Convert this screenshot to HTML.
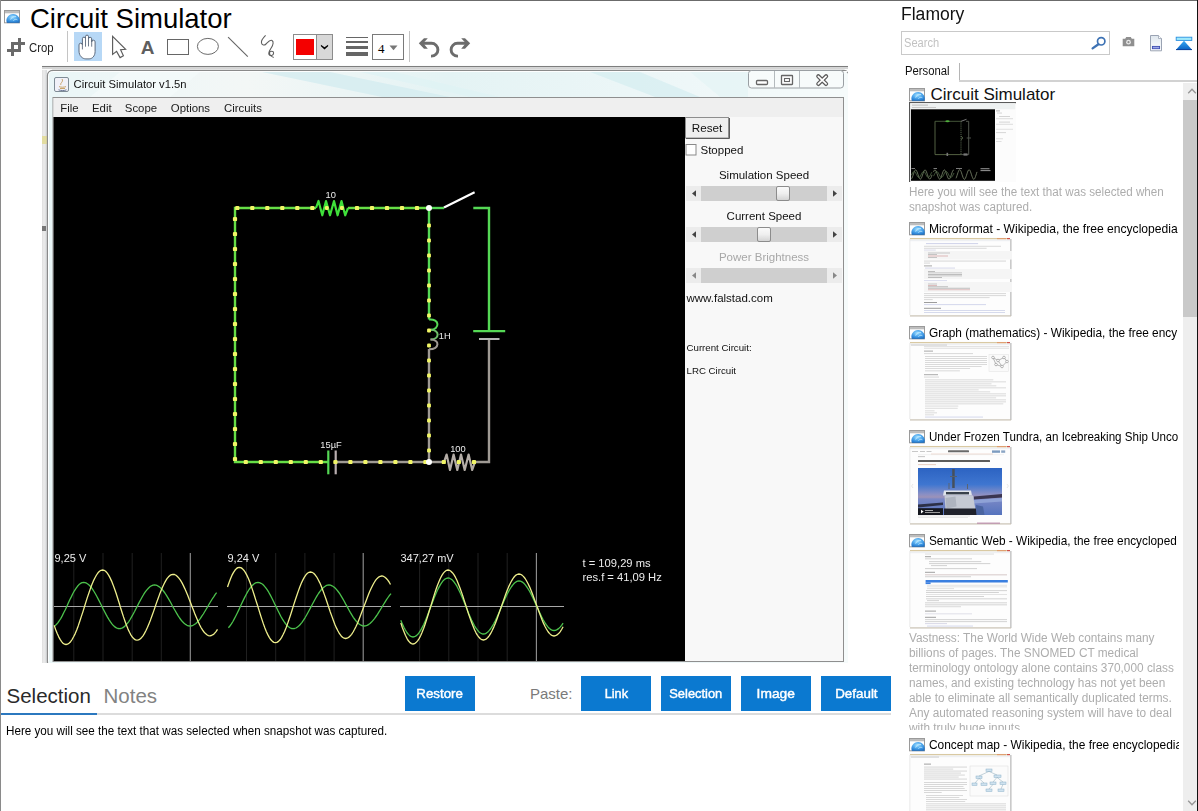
<!DOCTYPE html>
<html>
<head>
<meta charset="utf-8">
<title>Circuit Simulator</title>
<style>
html,body{margin:0;padding:0;}
html{width:1198px;height:811px;overflow:hidden;}
body{width:1198px;height:811px;overflow:hidden;background:#fff;position:relative;font-family:"Liberation Sans",sans-serif;color:#000;}
.a{position:absolute;}
.s{display:inline-block;transform-origin:0 50%;white-space:nowrap;}
.btn .s{transform-origin:50% 50%;}
.t{position:absolute;white-space:nowrap;line-height:1;}
#topb{left:0;top:0;width:1198px;height:1px;background:#6b6b6b;}
#leftb{left:0;top:0;width:1px;height:811px;background:#8a8a8a;}
#title{left:30px;top:3px;font-size:27.5px;line-height:31px;}
.btn{position:absolute;top:676px;height:35px;width:70px;background:#0b79d0;color:#fff;font-size:13.5px;font-weight:normal;-webkit-text-stroke:0.45px #fff;text-align:center;line-height:35px;}
.it{position:absolute;left:929px;font-size:13px;white-space:nowrap;line-height:16px;width:250px;overflow:hidden;color:#000;}
.gr{position:absolute;left:909px;font-size:12px;color:#adadad;line-height:15px;white-space:nowrap;}
.th{position:absolute;left:909px;width:103px;height:80px;overflow:hidden;}
.th svg,#th1 svg{display:block;}
</style>
</head>
<body>
<svg class="a" width="0" height="0" style="left:0;top:0"><defs><radialGradient id="glb" cx="0.45" cy="0.35" r="0.75"><stop offset="0" stop-color="#a9e2ff"/><stop offset="0.35" stop-color="#5fb4f2"/><stop offset="0.75" stop-color="#2d86d8"/><stop offset="1" stop-color="#2170c0"/></radialGradient></defs></svg>
<div class="a" id="topb"></div>
<div class="a" id="leftb"></div>

<!-- ===== title ===== -->
<svg class="a" style="left:4px;top:10px" width="17" height="14" viewBox="0 0 17 14"><rect x="0.5" y="0.5" width="15" height="12.3" fill="#fff" stroke="#9a9a9a"/><rect x="1" y="1" width="14" height="2.2" fill="#bdbdbd"/><rect x="1" y="3.2" width="14" height="0.8" fill="#e9e9e9"/><path d="M2.9 12.8 A6.7 6.3 0 1 1 15.3 12.8 Z" fill="url(#glb)"/><path d="M6.6 9.6c.8-2.4 3-3.6 5.4-3M9.4 10.6c1.2-1.4 2.8-1.6 4-.8" stroke="#c9eeff" stroke-width="0.9" fill="none" opacity=".85"/><path d="M2.9 12.6H15.3" stroke="#2a6fb4" stroke-width="0.8"/></svg>
<div class="t" id="title">Circuit Simulator</div>

<!-- ===== toolbar ===== -->
<div id="toolbar">
<!-- crop icon -->
<svg class="a" style="left:7px;top:38px" width="19" height="19" viewBox="0 0 19 19"><g fill="#6a6a6a"><rect x="4" y="4" width="3" height="14"/><rect x="4" y="4" width="14" height="3"/><rect x="11" y="0" width="3" height="14"/><rect x="0" y="11" width="14" height="3"/></g></svg>
<div class="t" style="left:29px;top:42px;font-size:12.2px;color:#222;"><span class="s" style="transform:scaleX(.93)">Crop</span></div>
<div class="a" style="left:67px;top:31px;width:1px;height:31px;background:#c4c4c4;"></div>
<!-- hand (selected) -->
<div class="a" style="left:74px;top:32px;width:28px;height:29px;background:#b7d8f6;"></div>
<svg class="a" style="left:78px;top:34px" width="20" height="26" viewBox="0 0 20 26"><path d="M1 17 V10.9 a1.7 1.7 0 0 1 3.4 0 V4.7 a1.55 1.55 0 0 1 3.1 0 V2.6 a1.5 1.5 0 0 1 3 0 V4.9 a1.6 1.6 0 0 1 3.2 0 V7.9 a1.7 1.7 0 0 1 3.4 0 V17.5 c0 4.6 -3 7.4 -6 7.4 h-3.2 c-3.4 0 -6.9 -3 -6.9 -7.9 z" fill="#fff" stroke="#5d6b7e" stroke-width="1"/><path d="M4.4 10.5V15.4M7.5 4.5V12.7M10.5 2.6V12.4M13.7 5V12.7" stroke="#5d6b7e" stroke-width="0.9" fill="none"/></svg>
<!-- arrow -->
<svg class="a" style="left:110px;top:34px" width="18" height="26" viewBox="0 0 18 26"><path d="M2.6 2.4 V20.4 L6.6 17.4 L10.1 23.6 L13.4 21.8 L10.6 15.7 L15.6 15.3 Z" fill="#fff" stroke="#5c5c5c" stroke-width="1.15" stroke-linejoin="miter"/></svg>
<!-- A -->
<div class="t" style="left:140.8px;top:38px;font-size:19px;font-weight:bold;color:#5e5e5e;">A</div>
<!-- rect -->
<div class="a" style="left:167px;top:39px;width:22px;height:16px;border:1px solid #666;box-sizing:border-box;"></div>
<!-- ellipse -->
<svg class="a" style="left:196px;top:37px" width="24" height="18" viewBox="0 0 24 18"><ellipse cx="11.9" cy="9.4" rx="10.5" ry="8" fill="#fff" stroke="#6a6a6a" stroke-width="1"/></svg>
<!-- line -->
<svg class="a" style="left:226px;top:36px" width="24" height="22" viewBox="0 0 24 22"><path d="M2.1 1.1 L21.8 20.7" stroke="#666" stroke-width="1.1" fill="none"/></svg>
<!-- squiggle -->
<svg class="a" style="left:258px;top:34px" width="22" height="26" viewBox="0 0 22 26"><path d="M7.6 1.4 C5 4 3 7 3.5 9 C4 11.5 6.5 11.6 8 10 C10 8 12 5.4 14 6.5 C16 7.6 15 11 13.5 13.5 C12 16 10 18 11 20.5 C12 22.6 15.6 21.6 15.6 19 C15.6 16.5 12 16.8 11.5 18.6 C11.4 20.6 13.5 22.6 15.7 23.5" stroke="#5e5e5e" stroke-width="1.1" fill="none"/></svg>
<!-- color -->
<div class="a" style="left:293px;top:34px;width:40px;height:26px;border:1px solid #8c8c8c;box-sizing:border-box;background:#fff;"></div>
<div class="a" style="left:296px;top:39px;width:18px;height:16px;background:#f40000;"></div>
<div class="a" style="left:316px;top:35px;width:16px;height:24px;background:#d8d8d8;border-left:1px solid #8c8c8c;box-sizing:border-box;"></div>
<svg class="a" style="left:320px;top:44px" width="9" height="6" viewBox="0 0 9 6"><path d="M0.9 0.8 L4.5 3.2 L8.1 0.8 L8.1 2.2 L4.5 5.6 L0.9 2.2 Z" fill="#000"/></svg>
<!-- line width -->
<div class="a" style="left:346px;top:37px;width:22px;height:1px;background:#666;"></div>
<div class="a" style="left:346px;top:41px;width:22px;height:2px;background:#666;"></div>
<div class="a" style="left:346px;top:46px;width:22px;height:3px;background:#666;"></div>
<div class="a" style="left:346px;top:52px;width:22px;height:4px;background:#666;"></div>
<div class="a" style="left:372px;top:34px;width:32px;height:26px;border:1px solid #7a7a7a;box-sizing:border-box;background:#fff;"></div>
<div class="t" style="left:378px;top:41.5px;font-size:13px;font-family:'Liberation Serif',serif;">4</div>
<svg class="a" style="left:389px;top:45px" width="9" height="6" viewBox="0 0 9 6"><path d="M0.5 0.5 L4.5 5.2 L8.5 0.5 Z" fill="#777"/></svg>
<div class="a" style="left:409px;top:31px;width:1px;height:31px;background:#c4c4c4;"></div>
<!-- undo/redo -->
<svg class="a" style="left:417px;top:36px" width="25" height="22" viewBox="0 0 25 22"><path d="M1.8 7.3 L7 2.2 H10.8 L7.3 6 V8.6 L10.8 12.7 H7 Z" fill="#6c6c6c"/><path d="M6 7.3 H14.5 A6.4 6.4 0 0 1 14.5 20.1 H14" stroke="#6c6c6c" stroke-width="2.9" fill="none"/></svg>
<svg class="a" style="left:447px;top:36px" width="25" height="22" viewBox="0 0 25 22"><g transform="translate(25,0) scale(-1,1)"><path d="M1.8 7.3 L7 2.2 H10.8 L7.3 6 V8.6 L10.8 12.7 H7 Z" fill="#6c6c6c"/><path d="M6 7.3 H14.5 A6.4 6.4 0 0 1 14.5 20.1 H14" stroke="#6c6c6c" stroke-width="2.9" fill="none"/></g></svg>
</div>

<!-- ===== screenshot ===== -->
<div id="shot">
<svg class="a" style="left:42px;top:65px;filter:blur(0.4px)" width="806" height="598" viewBox="42 65 806 598" font-family="Liberation Sans, sans-serif">
<defs><linearGradient id="tb" x1="0" y1="0" x2="1" y2="0"><stop offset="0" stop-color="#eaf6f7"/><stop offset="0.25" stop-color="#f3f7f6"/><stop offset="0.5" stop-color="#e4f3f4"/><stop offset="0.8" stop-color="#eef7f8"/><stop offset="1" stop-color="#f6fbfb"/></linearGradient><linearGradient id="thg" x1="0" y1="0" x2="0" y2="1"><stop offset="0" stop-color="#fbfbfb"/><stop offset="0.5" stop-color="#efefef"/><stop offset="1" stop-color="#d2d2d2"/></linearGradient><linearGradient id="ls" x1="0" y1="0" x2="1" y2="0"><stop offset="0" stop-color="#dedede"/><stop offset="0.4" stop-color="#ececec"/><stop offset="1" stop-color="#d6d8da"/></linearGradient></defs>
<rect x="42" y="65" width="806" height="598" fill="#fbfcfc"/>
<rect x="42" y="70" width="5" height="593" fill="url(#ls)"/>
<rect x="42" y="136" width="5" height="8" fill="#e2dca0"/>
<rect x="42" y="226" width="4" height="5" fill="#777"/>
<rect x="42" y="66" width="806" height="1.3" fill="#7d7d7d"/>
<rect x="42" y="68" width="806" height="1" fill="#d4d4d4"/>
<rect x="47.5" y="70.5" width="801.5" height="596" rx="5" fill="url(#tb)" stroke="#8a8a8a" stroke-width="1.3"/>
<rect x="48.5" y="71.5" width="803" height="594" rx="4" fill="none" stroke="#fdfefe" stroke-width="1"/>
<g opacity="0.8"><path d="M262 72L330 72L450 97L382 97Z" fill="#d5edf1"/><path d="M360 72L395 72L500 97L470 97Z" fill="#e0f3f5"/><path d="M590 72L640 72L700 97L655 97Z" fill="#d8eff2"/><path d="M120 72L200 72L170 97L90 97Z" fill="#f4fafa"/><path d="M690 72L748 72L748 97L720 97Z" fill="#e6f5f6"/></g>
<rect x="54.5" y="77.5" width="14" height="14" rx="1.5" fill="#f1f1f8" stroke="#7f8c96"/>
<path d="M60 88.5h5M59 86.6c2 .8 5 .8 7 0M61 85c-1.5-2 3-3 1-6" stroke="#c39a5a" stroke-width="0.9" fill="none"/><path d="M58.5 89.8c2.5 1 6 1 8 0" stroke="#6c7a96" stroke-width="1" fill="none"/>
<text x="73.6" y="88.4" font-size="11.6" fill="#111" textLength="113" lengthAdjust="spacingAndGlyphs">Circuit Simulator v1.5n</text>
<rect x="748.5" y="70.5" width="95" height="17.5" rx="3" fill="#f7fbfb" stroke="#9a9fa3"/>
<path d="M774.5 71v17M799.5 71v17" stroke="#b4babd"/>
<rect x="756.5" y="80.5" width="11" height="4" rx="1" fill="#fff" stroke="#666" stroke-width="1.3"/>
<rect x="781.5" y="75.5" width="11" height="9" rx="0.5" fill="#fff" stroke="#666" stroke-width="1.3"/><rect x="784.5" y="78.5" width="5" height="3" fill="#fff" stroke="#666" stroke-width="1.1"/>
<path d="M818.3 76.3l7.8 7.6M826.1 76.3l-7.8 7.6" stroke="#5a5a5a" stroke-width="4.2" stroke-linecap="round"/><path d="M818.3 76.3l7.8 7.6M826.1 76.3l-7.8 7.6" stroke="#fff" stroke-width="1.7" stroke-linecap="round"/>
<rect x="53" y="97.5" width="790.5" height="564" fill="#f6f6f6" stroke="#8f8f8f" stroke-width="1"/>
<rect x="53.5" y="98" width="789.5" height="19" fill="#efefef"/>
<text x="60.3" y="111.6" font-size="11.4" fill="#1a1a1a">File</text>
<text x="92" y="111.6" font-size="11.4" fill="#1a1a1a">Edit</text>
<text x="124.8" y="111.6" font-size="11.4" fill="#1a1a1a">Scope</text>
<text x="170.8" y="111.6" font-size="11.4" fill="#1a1a1a">Options</text>
<text x="224" y="111.6" font-size="11.4" fill="#1a1a1a">Circuits</text>
<rect x="53.5" y="117" width="631.5" height="544" fill="#000"/>
<g fill="none" stroke-width="2.4" stroke-linecap="butt">
<path d="M316 208H235V462H328" stroke="#66de46" stroke-linejoin="miter"/>
<path d="M348 208H429" stroke="#66de46"/>
<path d="M316 208 L318.5 201 L322.3 215.3 L326 201 L330 215.3 L334 201 L337.6 215.3 L341.5 201 L345.2 215.3 L348 208" stroke="#3fe03a" stroke-width="2.2" stroke-linejoin="round"/>
<path d="M429 208V319.5" stroke="#55d855"/>
<path d="M429 319.5 C440 318.5 440 329.5 430.5 329.8" stroke="#55d855" stroke-width="2"/>
<path d="M430.5 329.8 C440 329.5 440 339.5 430.5 339.6" stroke="#6fbf6a" stroke-width="2"/>
<path d="M430.5 339.6 C440 339.5 440 349 429 349.3" stroke="#9f9a94" stroke-width="2"/>
<path d="M429 349V462" stroke="#9f9a94"/>
<path d="M328.3 450.5V474.3" stroke="#55d855" stroke-width="2.2"/>
<path d="M335.7 450.5V474.3" stroke="#b9aeb0" stroke-width="2.2"/>
<path d="M336 462H444" stroke="#9f9a94"/>
<path d="M444 462 L446.6 454.6 L450 470 L453.6 454.6 L457.3 470 L461 454.6 L464.7 470 L468.6 454.6 L472.2 470 L475 462" stroke="#b3aca6" stroke-width="2.2" stroke-linejoin="round"/>
<path d="M475 462H489V339" stroke="#9f9a94" stroke-linejoin="miter"/>
<path d="M479 339H499.5" stroke="#b5b5b5" stroke-width="2"/>
<path d="M473.2 331.2H505.2" stroke="#55d855" stroke-width="2.2"/>
<path d="M473.3 208H489V331" stroke="#55d855" stroke-linejoin="miter"/>
<path d="M429 208H444" stroke="#55d855"/>
<path d="M444 207.4L474.6 192.2" stroke="#fff" stroke-width="2.2"/>
</g>
<g fill="#f1f566">
<rect x="235.2" y="205.9" width="4.2" height="4.2" rx="1.2"/>
<rect x="250.2" y="205.9" width="4.2" height="4.2" rx="1.2"/>
<rect x="265.2" y="205.9" width="4.2" height="4.2" rx="1.2"/>
<rect x="280.2" y="205.9" width="4.2" height="4.2" rx="1.2"/>
<rect x="295.2" y="205.9" width="4.2" height="4.2" rx="1.2"/>
<rect x="310.2" y="205.9" width="4.2" height="4.2" rx="1.2"/>
<rect x="324.9" y="206.1" width="3.8" height="3.8" rx="1.2"/>
<rect x="340" y="206.1" width="3.8" height="3.8" rx="1.2"/>
<rect x="354.9" y="205.9" width="4.2" height="4.2" rx="1.2"/>
<rect x="369.9" y="205.9" width="4.2" height="4.2" rx="1.2"/>
<rect x="384.9" y="205.9" width="4.2" height="4.2" rx="1.2"/>
<rect x="399.9" y="205.9" width="4.2" height="4.2" rx="1.2"/>
<rect x="414.9" y="205.9" width="4.2" height="4.2" rx="1.2"/>
<rect x="232.9" y="216.9" width="4.2" height="4.2" rx="1.2"/>
<rect x="232.9" y="231.9" width="4.2" height="4.2" rx="1.2"/>
<rect x="232.9" y="246.9" width="4.2" height="4.2" rx="1.2"/>
<rect x="232.9" y="261.9" width="4.2" height="4.2" rx="1.2"/>
<rect x="232.9" y="276.9" width="4.2" height="4.2" rx="1.2"/>
<rect x="232.9" y="291.9" width="4.2" height="4.2" rx="1.2"/>
<rect x="232.9" y="306.9" width="4.2" height="4.2" rx="1.2"/>
<rect x="232.9" y="321.9" width="4.2" height="4.2" rx="1.2"/>
<rect x="232.9" y="336.9" width="4.2" height="4.2" rx="1.2"/>
<rect x="232.9" y="351.9" width="4.2" height="4.2" rx="1.2"/>
<rect x="232.9" y="366.9" width="4.2" height="4.2" rx="1.2"/>
<rect x="232.9" y="381.9" width="4.2" height="4.2" rx="1.2"/>
<rect x="232.9" y="396.9" width="4.2" height="4.2" rx="1.2"/>
<rect x="232.9" y="411.9" width="4.2" height="4.2" rx="1.2"/>
<rect x="232.9" y="426.9" width="4.2" height="4.2" rx="1.2"/>
<rect x="232.9" y="441.9" width="4.2" height="4.2" rx="1.2"/>
<rect x="232.9" y="456.9" width="4.2" height="4.2" rx="1.2"/>
<rect x="243.7" y="459.9" width="4.2" height="4.2" rx="1.2"/>
<rect x="258.7" y="459.9" width="4.2" height="4.2" rx="1.2"/>
<rect x="273.7" y="459.9" width="4.2" height="4.2" rx="1.2"/>
<rect x="288.7" y="459.9" width="4.2" height="4.2" rx="1.2"/>
<rect x="303.7" y="459.9" width="4.2" height="4.2" rx="1.2"/>
<rect x="318.7" y="459.9" width="4.2" height="4.2" rx="1.2"/>
<rect x="333.3" y="459.9" width="4.2" height="4.2" rx="1.2"/>
<rect x="348.3" y="459.9" width="4.2" height="4.2" rx="1.2"/>
<rect x="363.3" y="459.9" width="4.2" height="4.2" rx="1.2"/>
<rect x="378.3" y="459.9" width="4.2" height="4.2" rx="1.2"/>
<rect x="393.3" y="459.9" width="4.2" height="4.2" rx="1.2"/>
<rect x="408.3" y="459.9" width="4.2" height="4.2" rx="1.2"/>
<rect x="423.3" y="459.9" width="4.2" height="4.2" rx="1.2"/>
<rect x="441.7" y="459.9" width="4.2" height="4.2" rx="1.2"/>
<rect x="456.7" y="459.9" width="4.2" height="4.2" rx="1.2"/>
<rect x="471.9" y="459.9" width="4.2" height="4.2" rx="1.2"/>
<rect x="427.1" y="223.6" width="3.8" height="3.8" rx="1.2"/>
<rect x="427.1" y="238.6" width="3.8" height="3.8" rx="1.2"/>
<rect x="427.1" y="253.6" width="3.8" height="3.8" rx="1.2"/>
<rect x="427.1" y="268.6" width="3.8" height="3.8" rx="1.2"/>
<rect x="427.1" y="283.6" width="3.8" height="3.8" rx="1.2"/>
<rect x="427.1" y="298.6" width="3.8" height="3.8" rx="1.2"/>
<rect x="427.1" y="313.6" width="3.8" height="3.8" rx="1.2"/>
<rect x="427.1" y="328.6" width="3.8" height="3.8" rx="1.2"/>
<rect x="427.1" y="343.6" width="3.8" height="3.8" rx="1.2"/>
<rect x="427.1" y="358.6" width="3.8" height="3.8" rx="1.2"/>
<rect x="427.1" y="373.6" width="3.8" height="3.8" rx="1.2"/>
<rect x="427.1" y="388.6" width="3.8" height="3.8" rx="1.2"/>
<rect x="427.1" y="403.6" width="3.8" height="3.8" rx="1.2"/>
<rect x="427.1" y="418.6" width="3.8" height="3.8" rx="1.2"/>
<rect x="427.1" y="433.6" width="3.8" height="3.8" rx="1.2"/>
<rect x="427.1" y="448.6" width="3.8" height="3.8" rx="1.2"/>
</g>
<circle cx="429" cy="208" r="3" fill="#fff"/><circle cx="429" cy="462" r="3" fill="#fff"/>
<g font-size="9.3" fill="#ececec">
<text x="325.5" y="197.8">10</text><text x="438.8" y="339">1H</text><text x="320.3" y="448.3">15µF</text><text x="450.2" y="452">100</text>
</g>
<g stroke="#202020" stroke-width="1">
<path d="M73.8 553V661"/>
<path d="M103 553V661"/>
<path d="M132.2 553V661"/>
<path d="M161.3 553V661"/>
</g>
<path d="M190.3 553V661" stroke="#949494" stroke-width="1.1"/>
<path d="M54 606.5H218" stroke="#a8a8a8" stroke-width="1.2"/>
<g fill="none" stroke-width="1.3" stroke-linejoin="round">
<path d="M54.6 626 L56.1 624.8 L57.6 623.1 L59.1 621 L60.7 618.6 L62.2 615.9 L63.7 612.8 L65.3 609.7 L66.8 606.4 L68.3 603 L69.8 599.7 L71.4 596.6 L72.9 593.5 L74.4 590.8 L76 588.4 L77.5 586.3 L79 584.6 L80.5 583.4 L82.1 582.6 L83.6 582.4 L85.1 582.6 L86.6 583.2 L88.1 584.2 L89.6 585.5 L91.1 587.2 L92.5 589.2 L94 591.5 L95.5 594 L97 596.7 L98.5 599.6 L100 602.5 L101.5 605.5 L103 608.6 L104.5 611.5 L106 614.4 L107.5 617.1 L109 619.6 L110.5 621.9 L111.9 623.9 L113.4 625.6 L114.9 626.9 L116.4 627.9 L117.9 628.5 L119.4 628.7 L120.9 628.5 L122.5 627.9 L124 626.9 L125.5 625.5 L127 623.8 L128.6 621.8 L130.1 619.5 L131.6 616.9 L133.1 614.2 L134.7 611.3 L136.2 608.3 L137.7 605.4 L139.2 602.4 L140.8 599.5 L142.3 596.8 L143.8 594.2 L145.3 591.9 L146.9 589.9 L148.4 588.2 L149.9 586.8 L151.4 585.8 L153 585.2 L154.5 585 L156 585.2 L157.5 585.7 L158.9 586.6 L160.4 587.7 L161.9 589.2 L163.4 591 L164.9 593 L166.3 595.2 L167.8 597.7 L169.3 600.2 L170.8 602.8 L172.2 605.5 L173.7 608.2 L175.2 610.8 L176.7 613.3 L178.2 615.8 L179.6 618 L181.1 620 L182.6 621.8 L184.1 623.3 L185.6 624.4 L187 625.3 L188.5 625.8 L190 626 L191.5 625.8 L193 625.3 L194.4 624.5 L195.9 623.4 L197.4 622 L198.9 620.3 L200.4 618.4 L201.8 616.2 L203.3 614 L204.8 611.5 L206.3 609 L207.8 606.5 L209.2 604 L210.7 601.5 L212.2 599 L213.7 596.8 L215.1 594.6 L216.6 592.7" stroke="#4cc24c"/>
<path d="M54.2 625.4 L55.6 629.5 L57.1 633.3 L58.6 636.6 L60.1 639.4 L61.6 641.6 L63 643.2 L64.5 644.2 L66 644.5 L67.5 644.2 L69 643.2 L70.6 641.7 L72.1 639.5 L73.6 636.8 L75.2 633.6 L76.7 629.9 L78.2 625.9 L79.7 621.5 L81.2 616.9 L82.8 612.1 L84.3 607.2 L85.8 602.4 L87.3 597.6 L88.9 593 L90.4 588.6 L91.9 584.6 L93.4 580.9 L95 577.7 L96.5 575 L98 572.8 L99.5 571.3 L101.1 570.3 L102.6 570 L104.1 570.3 L105.6 571.3 L107.1 572.9 L108.6 575.1 L110.1 577.9 L111.6 581.1 L113.1 584.9 L114.6 589 L116.1 593.3 L117.6 598 L119.1 602.7 L120.5 607.5 L122 612.2 L123.5 616.9 L125 621.2 L126.5 625.3 L128 629.1 L129.5 632.3 L131 635.1 L132.5 637.3 L134 638.9 L135.5 639.9 L137 640.2 L138.5 639.9 L140 639.1 L141.5 637.7 L143 635.8 L144.5 633.4 L146 630.5 L147.5 627.3 L149 623.7 L150.5 619.9 L152 615.8 L153.5 611.6 L155 607.2 L156.5 602.9 L158 598.7 L159.5 594.6 L161 590.8 L162.5 587.2 L164 584 L165.5 581.1 L167 578.7 L168.5 576.8 L170 575.4 L171.5 574.6 L173 574.3 L174.5 574.5 L176 575.3 L177.4 576.5 L178.9 578.1 L180.4 580.2 L181.9 582.6 L183.3 585.4 L184.8 588.6 L186.3 592 L187.8 595.5 L189.2 599.3 L190.7 603.1 L192.2 607 L193.7 610.8 L195.1 614.6 L196.6 618.1 L198.1 621.5 L199.6 624.7 L201 627.5 L202.5 629.9 L204 632 L205.5 633.6 L206.9 634.8 L208.4 635.6 L209.9 635.8 L211.4 635.5 L213 634.7 L214.5 633.4 L216 631.6 L217.5 629.3" stroke="#eeee8c"/>
</g>
<g stroke="#202020" stroke-width="1">
<path d="M246.5 553V661"/>
<path d="M275.7 553V661"/>
<path d="M304.9 553V661"/>
<path d="M334.1 553V661"/>
</g>
<path d="M363.2 553V661" stroke="#949494" stroke-width="1.1"/>
<path d="M227 606.5H391" stroke="#a8a8a8" stroke-width="1.2"/>
<g fill="none" stroke-width="1.3" stroke-linejoin="round">
<path d="M228.4 627.7 L229.9 626 L231.4 623.9 L232.9 621.5 L234.3 618.9 L235.8 616 L237.3 613 L238.8 609.9 L240.2 606.7 L241.7 603.5 L243.2 600.4 L244.7 597.4 L246.2 594.5 L247.6 591.9 L249.1 589.5 L250.6 587.4 L252.1 585.7 L253.6 584.2 L255 583.2 L256.5 582.6 L258 582.4 L259.5 582.6 L261 583.3 L262.6 584.3 L264.1 585.8 L265.6 587.6 L267.1 589.7 L268.7 592.2 L270.2 594.9 L271.7 597.8 L273.2 600.8 L274.7 604 L276.3 607.1 L277.8 610.3 L279.3 613.3 L280.8 616.2 L282.3 618.9 L283.9 621.4 L285.4 623.5 L286.9 625.3 L288.4 626.8 L290 627.8 L291.5 628.5 L293 628.7 L294.5 628.5 L296 628 L297.5 627 L299 625.8 L300.5 624.2 L302 622.3 L303.5 620.2 L305 617.8 L306.5 615.2 L308 612.5 L309.5 609.7 L311 606.9 L312.5 604 L314 601.2 L315.5 598.5 L317 595.9 L318.5 593.5 L320 591.4 L321.5 589.5 L323 587.9 L324.5 586.7 L326 585.7 L327.5 585.2 L329 585 L330.5 585.2 L332 585.8 L333.6 586.7 L335.1 588 L336.6 589.6 L338.1 591.5 L339.7 593.7 L341.2 596.1 L342.7 598.6 L344.2 601.3 L345.7 604.1 L347.3 606.9 L348.8 609.7 L350.3 612.4 L351.8 614.9 L353.3 617.3 L354.9 619.5 L356.4 621.4 L357.9 623 L359.4 624.3 L361 625.2 L362.5 625.8 L364 626 L365.5 625.8 L367 625.4 L368.5 624.6 L370 623.5 L371.5 622.1 L373 620.4 L374.5 618.6 L376 616.5 L377.5 614.3 L379 611.9 L380.5 609.5 L382 607 L383.5 604.5 L385 602.1 L386.5 599.7 L388 597.5 L389.5 595.4 L391 593.6" stroke="#4cc24c"/>
<path d="M227.5 587 L229 582.7 L230.5 578.8 L231.9 575.4 L233.4 572.6 L234.9 570.3 L236.4 568.6 L237.8 567.6 L239.3 567.3 L240.8 567.6 L242.3 568.6 L243.8 570.2 L245.3 572.4 L246.8 575.1 L248.3 578.3 L249.8 582 L251.3 586.1 L252.8 590.6 L254.3 595.2 L255.8 600.1 L257.4 605 L258.9 609.9 L260.4 614.8 L261.9 619.4 L263.4 623.9 L264.9 628 L266.4 631.7 L267.9 634.9 L269.4 637.6 L270.9 639.8 L272.4 641.4 L273.9 642.4 L275.4 642.7 L276.9 642.4 L278.5 641.4 L280 639.8 L281.5 637.6 L283 634.8 L284.6 631.5 L286.1 627.7 L287.6 623.6 L289.1 619.2 L290.7 614.5 L292.2 609.8 L293.7 604.9 L295.2 600.2 L296.8 595.5 L298.3 591.1 L299.8 587 L301.3 583.2 L302.9 579.9 L304.4 577.1 L305.9 574.9 L307.4 573.3 L309 572.3 L310.5 572 L312 572.3 L313.6 573.2 L315.1 574.8 L316.6 576.8 L318.1 579.5 L319.7 582.6 L321.2 586.1 L322.7 590 L324.2 594.1 L325.8 598.5 L327.3 603 L328.8 607.5 L330.3 612 L331.9 616.4 L333.4 620.5 L334.9 624.4 L336.4 627.9 L338 631 L339.5 633.7 L341 635.7 L342.5 637.3 L344.1 638.2 L345.6 638.5 L347.1 638.2 L348.6 637.4 L350.1 636.1 L351.6 634.3 L353.1 632 L354.6 629.3 L356.1 626.3 L357.6 622.9 L359.1 619.2 L360.6 615.3 L362.1 611.3 L363.6 607.2 L365.2 603.2 L366.7 599.2 L368.2 595.3 L369.7 591.6 L371.2 588.2 L372.7 585.2 L374.2 582.5 L375.7 580.2 L377.2 578.4 L378.7 577.1 L380.2 576.3 L381.7 576 L383.2 576.2 L384.6 577 L386.1 578.2 L387.6 579.9 L389.1 582 L390.5 584.5" stroke="#eeee8c"/>
</g>
<g stroke="#202020" stroke-width="1">
<path d="M419.6 553V661"/>
<path d="M448.8 553V661"/>
<path d="M478 553V661"/>
<path d="M507.2 553V661"/>
</g>
<path d="M536.4 553V661" stroke="#949494" stroke-width="1.1"/>
<path d="M400 606.5H564" stroke="#a8a8a8" stroke-width="1.2"/>
<g fill="none" stroke-width="1.3" stroke-linejoin="round">
<path d="M400.8 620.3 L402.3 623.9 L403.9 627.2 L405.4 630 L406.9 632.5 L408.4 634.4 L410 635.9 L411.5 636.7 L413 637 L414.5 636.7 L416 635.9 L417.6 634.6 L419.1 632.7 L420.6 630.4 L422.1 627.6 L423.7 624.5 L425.2 621.1 L426.7 617.4 L428.2 613.5 L429.7 609.5 L431.3 605.5 L432.8 601.5 L434.3 597.6 L435.8 593.9 L437.3 590.5 L438.9 587.4 L440.4 584.6 L441.9 582.3 L443.4 580.4 L445 579.1 L446.5 578.3 L448 578 L449.5 578.2 L450.9 579 L452.4 580.1 L453.9 581.8 L455.4 583.8 L456.9 586.2 L458.3 589 L459.8 592 L461.3 595.3 L462.8 598.8 L464.2 602.3 L465.7 606 L467.2 609.7 L468.6 613.2 L470.1 616.7 L471.6 620 L473.1 623 L474.5 625.8 L476 628.2 L477.5 630.2 L479 631.9 L480.4 633 L481.9 633.8 L483.4 634 L484.9 633.8 L486.4 633.1 L487.8 632 L489.3 630.4 L490.8 628.5 L492.3 626.2 L493.8 623.6 L495.3 620.8 L496.8 617.6 L498.2 614.4 L499.7 611 L501.2 607.5 L502.7 604 L504.2 600.6 L505.6 597.4 L507.1 594.2 L508.6 591.4 L510.1 588.8 L511.6 586.5 L513.1 584.6 L514.5 583 L516 581.9 L517.5 581.2 L519 581 L520.5 581.2 L522 581.9 L523.6 583 L525.1 584.6 L526.6 586.6 L528.1 588.9 L529.7 591.5 L531.2 594.4 L532.7 597.5 L534.2 600.7 L535.7 604.1 L537.3 607.4 L538.8 610.8 L540.3 614 L541.8 617.1 L543.3 620 L544.9 622.6 L546.4 624.9 L547.9 626.9 L549.4 628.5 L551 629.6 L552.5 630.3 L554 630.5 L555.5 630.3 L557 629.6 L558.6 628.6 L560.1 627.1 L561.6 625.3 L563.1 623.1" stroke="#4cc24c"/>
<path d="M400.8 622.9 L402.3 627.5 L403.9 631.6 L405.4 635.3 L406.9 638.3 L408.4 640.8 L410 642.6 L411.5 643.6 L413 644 L414.5 643.7 L416 642.6 L417.6 640.9 L419.1 638.6 L420.6 635.7 L422.1 632.3 L423.7 628.3 L425.2 624 L426.7 619.4 L428.2 614.5 L429.7 609.5 L431.3 604.5 L432.8 599.5 L434.3 594.6 L435.8 590 L437.3 585.7 L438.9 581.7 L440.4 578.3 L441.9 575.4 L443.4 573.1 L445 571.4 L446.5 570.3 L448 570 L449.5 570.3 L450.9 571.2 L452.4 572.7 L453.9 574.7 L455.4 577.2 L456.9 580.3 L458.3 583.7 L459.8 587.5 L461.3 591.6 L462.8 595.9 L464.2 600.4 L465.7 605 L467.2 609.6 L468.6 614.1 L470.1 618.4 L471.6 622.5 L473.1 626.3 L474.5 629.7 L476 632.8 L477.5 635.3 L479 637.3 L480.4 638.8 L481.9 639.7 L483.4 640 L484.9 639.7 L486.4 638.9 L487.8 637.5 L489.3 635.6 L490.8 633.2 L492.3 630.3 L493.8 627.1 L495.3 623.5 L496.8 619.6 L498.2 615.5 L499.7 611.3 L501.2 607 L502.7 602.7 L504.2 598.5 L505.6 594.4 L507.1 590.5 L508.6 586.9 L510.1 583.7 L511.6 580.8 L513.1 578.4 L514.5 576.5 L516 575.1 L517.5 574.3 L519 574 L520.5 574.3 L522 575.1 L523.6 576.6 L525.1 578.5 L526.6 581 L528.1 583.8 L529.7 587.1 L531.2 590.7 L532.7 594.6 L534.2 598.7 L535.7 602.9 L537.3 607.1 L538.8 611.3 L540.3 615.4 L541.8 619.3 L543.3 622.9 L544.9 626.2 L546.4 629 L547.9 631.5 L549.4 633.4 L551 634.9 L552.5 635.7 L554 636 L555.5 635.7 L557 634.9 L558.6 633.6 L560.1 631.8 L561.6 629.5 L563.1 626.8" stroke="#eeee8c"/>
</g>
<g font-size="11" fill="#ececec">
<text x="54.5" y="561.9">9,25 V</text><text x="227.5" y="561.9">9,24 V</text><text x="400.5" y="561.9">347,27 mV</text>
<text x="582.5" y="566.6" font-size="11.2">t = 109,29 ms</text><text x="582.5" y="580.6" font-size="11.2">res.f = 41,09 Hz</text>
</g>
<rect x="685" y="117" width="158" height="544" fill="#f8f8f8"/>
<rect x="685.5" y="117.5" width="43" height="20.5" fill="#efefef" stroke="#8e8e8e"/><path d="M686 138.5H729.5V118" stroke="#5c5c5c" fill="none"/>
<text x="691.8" y="132" font-size="11.7" fill="#111">Reset</text>
<rect x="686" y="144.5" width="10" height="10.5" fill="#fff" stroke="#8a8a8a"/>
<text x="700.5" y="154.2" font-size="11.5" fill="#111">Stopped</text>
<text x="764" y="178.6" font-size="11.5" fill="#111" text-anchor="middle">Simulation Speed</text>
<rect x="686" y="186" width="156" height="15" fill="#ececec"/>
<rect x="701" y="186" width="126" height="15" fill="#cfcfcf"/>
<path d="M696 190.3l-4 3.2l4 3.2z" fill="#444"/>
<path d="M833 190.3l4 3.2l-4 3.2z" fill="#444"/>
<rect x="776.5" y="186.5" width="13" height="14" rx="1.5" fill="url(#thg)" stroke="#8c8c8c"/>
<text x="764" y="219.6" font-size="11.5" fill="#111" text-anchor="middle">Current Speed</text>
<rect x="686" y="227" width="156" height="15" fill="#ececec"/>
<rect x="701" y="227" width="126" height="15" fill="#cfcfcf"/>
<path d="M696 231.3l-4 3.2l4 3.2z" fill="#444"/>
<path d="M833 231.3l4 3.2l-4 3.2z" fill="#444"/>
<rect x="757.5" y="227.5" width="13" height="14" rx="1.5" fill="url(#thg)" stroke="#8c8c8c"/>
<text x="764" y="260.8" font-size="11.5" fill="#a8a8a8" text-anchor="middle">Power Brightness</text>
<rect x="686" y="268" width="156" height="15" fill="#ececec"/>
<rect x="701" y="268" width="126" height="15" fill="#cfcfcf"/>
<path d="M696 272.3l-4 3.2l4 3.2z" fill="#888"/>
<path d="M833 272.3l4 3.2l-4 3.2z" fill="#888"/>
<text x="686.5" y="301.8" font-size="11.5" fill="#111">www.falstad.com</text>
<text x="686.5" y="350.6" font-size="9.7" fill="#111">Current Circuit:</text>
<text x="686.5" y="374" font-size="9.7" fill="#111">LRC Circuit</text>
</svg>
</div>

<!-- ===== bottom ===== -->
<div class="t" style="left:6.5px;top:686px;font-size:20.5px;color:#2a2a2a;">Selection</div>
<div class="t" style="left:103.5px;top:686px;font-size:20.5px;color:#828282;">Notes</div>
<div class="a" style="left:1px;top:713px;width:890px;height:2px;background:#dcdcdc;"></div>
<div class="a" style="left:1px;top:713px;width:96px;height:2px;background:#2b78bf;"></div>
<div class="btn" style="left:405px;"><span class="s" style="transform:scaleX(0.985)">Restore</span></div>
<div class="t" style="left:530px;top:686px;font-size:15px;color:#7a7a7a;">Paste:</div>
<div class="btn" style="left:581px;"><span class="s" style="transform:scaleX(0.94)">Link</span></div>
<div class="btn" style="left:661px;"><span class="s" style="transform:scaleX(0.955)">Selection</span></div>
<div class="btn" style="left:741px;"><span class="s" style="transform:scaleX(1.02)">Image</span></div>
<div class="btn" style="left:821px;"><span class="s" style="transform:scaleX(0.99)">Default</span></div>
<div class="t" style="left:5.5px;top:725px;font-size:12px;"><span class="s" style="transform:scaleX(.972)">Here you will see the text that was selected when snapshot was captured.</span></div>

<!-- ===== right panel ===== -->
<div id="right">
<div class="a" style="left:1197px;top:0;width:1px;height:811px;background:#111;"></div>
<div class="t" style="left:901px;top:4px;font-size:18px;line-height:21px;color:#111;"><span class="s" style="transform:scaleX(.975)">Flamory</span></div>
<div class="a" style="left:901px;top:31px;width:209px;height:24px;border:1px solid #c9c9c9;box-sizing:border-box;background:#fff;"></div>
<div class="t" style="left:904px;top:36px;font-size:12.3px;line-height:14px;color:#c2c2c2;"><span class="s" style="transform:scaleX(.9)">Search</span></div>
<svg class="a" style="left:1090px;top:35px" width="18" height="17" viewBox="0 0 18 17"><circle cx="11.2" cy="6.3" r="3.7" fill="#fff" stroke="#3d72b4" stroke-width="1.7"/><path d="M8.4 9.2 L2.6 13.4" stroke="#3d72b4" stroke-width="2.3" stroke-linecap="round"/></svg>
<svg class="a" style="left:1122px;top:36px" width="14" height="12" viewBox="0 0 14 12"><path d="M0.7 2.7h2.5l1-1.8h4.6l1 1.8h2.5v7.6h-11.6z" fill="#8f8f8f"/><circle cx="6.5" cy="6.2" r="2.4" fill="#e8e8e8"/><circle cx="6.5" cy="6.2" r="1.1" fill="#8f8f8f"/></svg>
<svg class="a" style="left:1149px;top:34px" width="14" height="18" viewBox="0 0 14 18"><defs><linearGradient id="pg" x1="0" y1="0" x2="0" y2="1"><stop offset="0" stop-color="#dfe7ee"/><stop offset="1" stop-color="#ffffff"/></linearGradient></defs><path d="M1.5 1.5h8l3 3v12.3h-11z" fill="url(#pg)" stroke="#9aa3b3" stroke-width="1"/><path d="M9.5 1.5v3h3" fill="#fff" stroke="#9aa3b3" stroke-width="0.8"/><rect x="3.4" y="12.4" width="7.2" height="2.3" fill="#9aa6e8" stroke="#3c4cb0" stroke-width="0.9"/></svg>
<svg class="a" style="left:1175px;top:36px" width="18" height="15" viewBox="0 0 18 15"><defs><linearGradient id="up" x1="0" y1="0" x2="0" y2="1"><stop offset="0" stop-color="#37a8f4"/><stop offset="1" stop-color="#0b62c4"/></linearGradient></defs><rect x="1.2" y="1.2" width="15.6" height="3.2" fill="#9fe9fb" stroke="#2a8fe0" stroke-width="0.9"/><path d="M9 4.8 L17 13.8 H1 Z" fill="url(#up)"/><path d="M1 13.6H17" stroke="#0a3f9a" stroke-width="1"/></svg>
<div class="t" style="left:905px;top:64px;font-size:12px;line-height:14px;color:#111;"><span class="s" style="transform:scaleX(.94)">Personal</span></div>
<div class="a" style="left:959px;top:63px;width:1px;height:18px;background:#b5b5b5;"></div>
<div class="a" style="left:959px;top:80px;width:238px;height:2px;background:#d2d2d2;"></div>
<div class="a" style="left:1183px;top:83px;width:14px;height:728px;background:#eeeeee;"></div>
<div class="a" style="left:1183px;top:100px;width:14px;height:217px;background:#c9c9c9;"></div>
<svg class="a" style="left:1186.5px;top:87px" width="10" height="8" viewBox="0 0 10 8"><path d="M1.2 6.3L5 2.3L8.8 6.3" stroke="#969696" stroke-width="1.3" fill="none"/></svg>
<svg class="a" style="left:1186.5px;top:799px" width="10" height="8" viewBox="0 0 10 8"><path d="M1.2 1.7L5 5.7L8.8 1.7" stroke="#969696" stroke-width="1.3" fill="none"/></svg>
<svg class="a" style="left:909px;top:88px" width="17" height="14" viewBox="0 0 17 14"><rect x="0.5" y="0.5" width="15" height="12.3" fill="#fff" stroke="#9a9a9a"/><rect x="1" y="1" width="14" height="2.2" fill="#bdbdbd"/><rect x="1" y="3.2" width="14" height="0.8" fill="#e9e9e9"/><path d="M2.9 12.8 A6.7 6.3 0 1 1 15.3 12.8 Z" fill="url(#glb)"/><path d="M6.6 9.6c.8-2.4 3-3.6 5.4-3M9.4 10.6c1.2-1.4 2.8-1.6 4-.8" stroke="#c9eeff" stroke-width="0.9" fill="none" opacity=".85"/><path d="M2.9 12.6H15.3" stroke="#2a6fb4" stroke-width="0.8"/></svg>
<div class="t" style="left:930.5px;top:86px;font-size:17px;line-height:18px;color:#111;">Circuit Simulator</div>
<div id="th1" class="a" style="left:909px;top:102px;width:107px;height:80px;"><svg width="107" height="80" viewBox="0 0 107 80"><rect width="107" height="80" fill="#fcfcfc"/><rect x="0" y="0" width="107" height="1.2" fill="#5a5a5a"/><rect x="0" y="0" width="1.2" height="80" fill="#555"/><rect x="1.2" y="1.2" width="105" height="6" fill="#eef1f1"/><rect x="3" y="2.6" width="16" height="1" fill="#bdbdbd"/><rect x="3" y="5" width="24" height="1" fill="#c8c8c8"/><rect x="2" y="7.3" width="84" height="71.5" fill="#000"/><g fill="none" stroke-width="0.9"><path d="M26 19.3V52.6H52" stroke="#5c6c4a"/><path d="M26 19.3H52" stroke="#4c6040"/><path d="M52 19.3V52.6" stroke="#5a6a50" stroke-dasharray="1.2 0.9"/><path d="M52 52.6H59.7V19.3H57" stroke="#5a5f56"/><path d="M52 19.3L57.5 17.3" stroke="#888"/><path d="M57.7 36H62" stroke="#565a52"/><path d="M52 34.5c2 .3 2 2.6 0 3" stroke="#6a7a5a"/></g><ellipse cx="38.5" cy="19.2" rx="2.2" ry="1" fill="#4fae3c"/><rect x="37.5" y="50.8" width="1.6" height="3.2" fill="#777"/><rect x="54.5" y="51.4" width="4" height="2.2" fill="#777"/><g fill="none" stroke="#7d8a6e" stroke-width="0.8"><path d="M2.5 76.8 L3 76 L3.5 74.8 L4 73.4 L4.5 71.9 L5 70.4 L5.5 69.2 L6 68.3 L6.5 67.9 L7 68 L7.5 68.6 L8 69.7 L8.5 71 L9 72.5 L9.5 74 L10 75.4 L10.5 76.4 L11 77 L11.5 77.1 L12 76.7 L12.5 75.8 L13 74.6 L13.5 73.1 L14 71.6 L14.5 70.1 L15 69 L15.5 68.2 L16 67.9 L16.5 68.1 L17 68.8 L17.5 69.9 L18 71.3 L18.5 72.8 L19 74.3 L19.5 75.6 L20 76.5 L20.5 77 L21 77 L21.5 76.5 L22 75.6 L22.5 74.3 L23 72.8"/><path d="M2.5 73.1 L3 72.1 L3.5 71.1 L4 70.3 L4.5 69.8 L5 69.5 L5.5 69.6 L6 70 L6.5 70.6 L7 71.5 L7.5 72.5 L8 73.5 L8.5 74.4 L9 75 L9.5 75.4 L10 75.5 L10.5 75.2 L11 74.7 L11.5 73.9 L12 72.9 L12.5 71.9 L13 71 L13.5 70.2 L14 69.7 L14.5 69.5 L15 69.6 L15.5 70.1 L16 70.8 L16.5 71.7 L17 72.7 L17.5 73.7 L18 74.5 L18.5 75.1 L19 75.5 L19.5 75.5 L20 75.1 L20.5 74.5 L21 73.7 L21.5 72.7 L22 71.7 L22.5 70.8 L23 70.1" stroke="#56704a"/><path d="M24.5 69.9 L25 68.8 L25.5 68.1 L26 67.9 L26.5 68.2 L27 69 L27.5 70.1 L28 71.6 L28.5 73.1 L29 74.6 L29.5 75.8 L30 76.7 L30.5 77.1 L31 77 L31.5 76.4 L32 75.4 L32.5 74 L33 72.5 L33.5 71 L34 69.7 L34.5 68.6 L35 68 L35.5 67.9 L36 68.3 L36.5 69.2 L37 70.4 L37.5 71.9 L38 73.4 L38.5 74.8 L39 76 L39.5 76.8 L40 77.1 L40.5 76.9 L41 76.2 L41.5 75.1 L42 73.7 L42.5 72.2 L43 70.7 L43.5 69.4 L44 68.5 L44.5 68 L45 68"/><path d="M24.5 74.2 L25 73.3 L25.5 72.3 L26 71.3 L26.5 70.5 L27 69.9 L27.5 69.5 L28 69.5 L28.5 69.9 L29 70.5 L29.5 71.3 L30 72.3 L30.5 73.3 L31 74.2 L31.5 74.9 L32 75.4 L32.5 75.5 L33 75.3 L33.5 74.8 L34 74 L34.5 73.1 L35 72.1 L35.5 71.1 L36 70.3 L36.5 69.8 L37 69.5 L37.5 69.6 L38 70 L38.5 70.6 L39 71.5 L39.5 72.5 L40 73.5 L40.5 74.4 L41 75 L41.5 75.4 L42 75.5 L42.5 75.2 L43 74.7 L43.5 73.8 L44 72.9 L44.5 71.9 L45 71" stroke="#56704a"/><path d="M47 76.3 L47.5 75.1 L48 73.6 L48.5 72 L49 70.5 L49.5 69.2 L50 68.2 L50.5 67.7 L51 67.8 L51.5 68.4 L52 69.4 L52.5 70.8 L53 72.4 L53.5 73.9 L54 75.4 L54.5 76.5 L55 77.1 L55.5 77.3 L56 76.9 L56.5 76.1 L57 74.8 L57.5 73.3 L58 71.7 L58.5 70.2 L59 68.9 L59.5 68.1 L60 67.7 L60.5 67.9 L61 68.5 L61.5 69.7 L62 71.1 L62.5 72.7 L63 74.2 L63.5 75.6 L64 76.6 L64.5 77.2 L65 77.3 L65.5 76.8 L66 75.8 L66.5 74.5 L67 73 L67.5 71.4 L68 69.9"/></g><rect x="2.5" y="66" width="3.5" height="0.8" fill="#999"/><rect x="24.5" y="66" width="3.5" height="0.8" fill="#999"/><rect x="47" y="66" width="6" height="0.8" fill="#999"/><rect x="71.5" y="66.3" width="9" height="0.9" fill="#aaa"/><rect x="71.5" y="68.2" width="10" height="0.9" fill="#aaa"/><rect x="87" y="8.2" width="4" height="1.3" fill="#c4c4c4"/><rect x="88" y="10.6" width="5" height="0.9" fill="#cfcfcf"/><rect x="90" y="14" width="11" height="1" fill="#d4d4d4"/><rect x="87" y="16.2" width="17" height="1" fill="#dcdcdc"/><rect x="90" y="19.6" width="11" height="1" fill="#d4d4d4"/><rect x="87" y="21.8" width="17" height="1" fill="#dcdcdc"/><rect x="87" y="26.8" width="17" height="1" fill="#e2e2e2"/><rect x="87" y="30.2" width="10" height="0.9" fill="#d2d2d2"/><rect x="87" y="36.4" width="7" height="0.8" fill="#d8d8d8"/><rect x="87" y="39.2" width="5.5" height="0.8" fill="#d8d8d8"/></svg></div>
<div class="gr" style="top:184.5px;"><span class="s" style="transform:scaleX(.972);transform-origin:0 0">Here you will see the text that was selected when<br>snapshot was captured.</span></div>
<svg class="a" style="left:909px;top:222px" width="17" height="14" viewBox="0 0 17 14"><rect x="0.5" y="0.5" width="15" height="12.3" fill="#fff" stroke="#9a9a9a"/><rect x="1" y="1" width="14" height="2.2" fill="#bdbdbd"/><rect x="1" y="3.2" width="14" height="0.8" fill="#e9e9e9"/><path d="M2.9 12.8 A6.7 6.3 0 1 1 15.3 12.8 Z" fill="url(#glb)"/><path d="M6.6 9.6c.8-2.4 3-3.6 5.4-3M9.4 10.6c1.2-1.4 2.8-1.6 4-.8" stroke="#c9eeff" stroke-width="0.9" fill="none" opacity=".85"/><path d="M2.9 12.6H15.3" stroke="#2a6fb4" stroke-width="0.8"/></svg>
<div class="it" style="top:221px;"><span class="s" style="transform:scaleX(0.93);transform-origin:0 0">Microformat - Wikipedia, the free encyclopedia</span></div>
<div id="th2" class="th" style="top:237px;"><svg width="103" height="80" viewBox="0 0 103 80"><rect x="0" y="0" width="103" height="80" fill="#fdfdfd"/><rect x="1" y="1" width="100" height="1.3" fill="#d9c9a2"/><rect x="88" y="1" width="9" height="1.3" fill="#e0a070"/><rect x="98" y="1" width="3" height="1.3" fill="#d05048"/><rect x="1" y="2.6" width="100" height="1.6" fill="#eef0f3"/><rect x="101.2" y="2" width="1.3" height="77" fill="#bdbdbd"/><rect x="1" y="78.3" width="101" height="1.2" fill="#c9c2b4"/><rect x="0.5" y="2" width="0.8" height="76" fill="#e6e6e6"/><rect x="15" y="14" width="88" height="8.5" fill="#f5f5f5"/><rect x="15" y="32" width="88" height="10" fill="#f5f5f5"/><rect x="15" y="45" width="88" height="10" fill="#f5f5f5"/><rect x="17" y="6.2" width="52.1" height="0.9" fill="#c9cde6"/><rect x="15" y="8.8" width="77" height="0.9" fill="#d5d5d5"/><rect x="15" y="10.8" width="62.6" height="0.9" fill="#d5d5d5"/><rect x="15" y="12.6" width="11.8" height="0.9" fill="#d8d8e8"/><rect x="19" y="15.6" width="22" height="0.8" fill="#b8b8b8"/><rect x="19" y="17.2" width="9" height="0.8" fill="#b8b8b8"/><rect x="19" y="18.6" width="20" height="0.8" fill="#d8a8a8"/><rect x="19" y="20" width="9" height="0.8" fill="#b8b8b8"/><rect x="15" y="23.6" width="82" height="0.9" fill="#d2d2d2"/><rect x="15" y="25.6" width="6" height="0.9" fill="#d2d2d2"/><rect x="15" y="28.4" width="8" height="1" fill="#a8a8a8"/><rect x="16" y="30.6" width="30" height="0.9" fill="#d2d4e8"/><rect x="19" y="34" width="7" height="0.8" fill="#b0b0b0"/><rect x="19" y="35.5" width="34" height="0.8" fill="#bcbcbc"/><rect x="19" y="37" width="34" height="0.8" fill="#b0b0b0"/><rect x="19" y="38.5" width="34" height="0.8" fill="#bcbcbc"/><rect x="19" y="40" width="14" height="0.8" fill="#b0b0b0"/><rect x="15" y="43.2" width="23" height="0.9" fill="#d4d6ea"/><rect x="19" y="46.6" width="9" height="0.8" fill="#bcbcbc"/><rect x="19" y="48" width="9" height="0.8" fill="#d8b0b0"/><rect x="19" y="49.4" width="20" height="0.8" fill="#b0b0b0"/><rect x="19" y="50.8" width="42" height="0.8" fill="#b0b0b0"/><rect x="19" y="52.4" width="42" height="0.8" fill="#d8b0b0"/><rect x="15" y="56.2" width="82" height="0.9" fill="#d4d4d4"/><rect x="15" y="58.2" width="82" height="0.9" fill="#d4d4d4"/><rect x="15" y="60.2" width="65.6" height="0.9" fill="#d4d4d4"/><rect x="15" y="62.2" width="8.7" height="0.9" fill="#d4d4d4"/><rect x="15" y="65" width="13" height="1" fill="#9c9c9c"/><rect x="15" y="67.2" width="62" height="0.9" fill="#cfd3ea"/><rect x="15" y="70.8" width="17" height="1" fill="#9c9c9c"/><rect x="15" y="73" width="81" height="0.9" fill="#d2d6ea"/><rect x="15" y="75" width="81" height="0.9" fill="#d2d6ea"/></svg></div>
<svg class="a" style="left:909px;top:326px" width="17" height="14" viewBox="0 0 17 14"><rect x="0.5" y="0.5" width="15" height="12.3" fill="#fff" stroke="#9a9a9a"/><rect x="1" y="1" width="14" height="2.2" fill="#bdbdbd"/><rect x="1" y="3.2" width="14" height="0.8" fill="#e9e9e9"/><path d="M2.9 12.8 A6.7 6.3 0 1 1 15.3 12.8 Z" fill="url(#glb)"/><path d="M6.6 9.6c.8-2.4 3-3.6 5.4-3M9.4 10.6c1.2-1.4 2.8-1.6 4-.8" stroke="#c9eeff" stroke-width="0.9" fill="none" opacity=".85"/><path d="M2.9 12.6H15.3" stroke="#2a6fb4" stroke-width="0.8"/></svg>
<div class="it" style="top:325px;"><span class="s" style="transform:scaleX(0.911);transform-origin:0 0">Graph (mathematics) - Wikipedia, the free ency</span></div>
<div id="th3" class="th" style="top:341px;"><svg width="103" height="80" viewBox="0 0 103 80"><rect x="0" y="0" width="103" height="80" fill="#fdfdfd"/><rect x="1" y="1" width="100" height="1.3" fill="#d9c9a2"/><rect x="88" y="1" width="9" height="1.3" fill="#e0a070"/><rect x="98" y="1" width="3" height="1.3" fill="#d05048"/><rect x="1" y="2.6" width="100" height="1.6" fill="#eef0f3"/><rect x="101.2" y="2" width="1.3" height="77" fill="#bdbdbd"/><rect x="1" y="78.3" width="101" height="1.2" fill="#c9c2b4"/><rect x="0.5" y="2" width="0.8" height="76" fill="#e6e6e6"/><rect x="2" y="3.6" width="36" height="0.9" fill="#c8c8c8"/><rect x="15" y="5.2" width="85" height="0.9" fill="#dcdcdc"/><rect x="15" y="6.8" width="85" height="0.9" fill="#dcdcdc"/><rect x="15" y="9.6" width="9" height="1" fill="#a8a8a8"/><rect x="15" y="12.2" width="49" height="0.9" fill="#d4d4d4"/><rect x="16" y="15" width="62" height="0.9" fill="#d6d6d6"/><rect x="16" y="17" width="62" height="0.9" fill="#d6d6d6"/><rect x="16" y="19" width="62" height="0.9" fill="#d6d6d6"/><rect x="16" y="21" width="62" height="0.9" fill="#d6d6d6"/><rect x="16" y="23" width="62" height="0.9" fill="#d6d6d6"/><rect x="16" y="25" width="56.6" height="0.9" fill="#d6d6d6"/><rect x="16" y="27" width="45.1" height="0.9" fill="#d6d6d6"/><rect x="16" y="29.4" width="34.9" height="0.9" fill="#d6d6d6"/><rect x="80" y="13.5" width="19.5" height="17" fill="#fafafa" stroke="#e6e6e6" stroke-width="0.6"/><g transform="translate(0,2.5)"><g fill="none" stroke="#9a9a9a" stroke-width="0.7"><path d="M84 14l5 3l6-3l3 4l-5 5l-6-2z M89 17l4 6"/></g><g fill="#fff" stroke="#8a8a8a" stroke-width="0.6"><circle cx="84" cy="14" r="1.3"/><circle cx="89" cy="17" r="1.3"/><circle cx="95" cy="14" r="1.3"/><circle cx="98" cy="18" r="1.3"/><circle cx="93" cy="23" r="1.3"/><circle cx="87" cy="21" r="1.3"/></g></g><rect x="15" y="33.2" width="14" height="1" fill="#a8a8a8"/><rect x="15" y="35.6" width="15" height="0.9" fill="#d4d4d4"/><rect x="16" y="38.4" width="68.3" height="0.9" fill="#d8d8d8"/><rect x="16" y="40.4" width="81" height="0.9" fill="#d8d8d8"/><rect x="16" y="42.4" width="66.5" height="0.9" fill="#d8d8d8"/><rect x="16" y="44.4" width="71.3" height="0.9" fill="#d8d8d8"/><rect x="16" y="46.4" width="81" height="0.9" fill="#d8d8d8"/><rect x="16" y="48.4" width="53.7" height="0.9" fill="#d8d8d8"/><rect x="16" y="50.4" width="65.2" height="0.9" fill="#d8d8d8"/><rect x="16" y="52.4" width="81" height="0.9" fill="#d8d8d8"/><rect x="16" y="54.4" width="81" height="0.9" fill="#d8d8d8"/><rect x="16" y="56.4" width="71.1" height="0.9" fill="#d8d8d8"/><rect x="16" y="58.4" width="81" height="0.9" fill="#d8d8d8"/><rect x="16" y="60.4" width="81" height="0.9" fill="#d8d8d8"/><rect x="16" y="62.4" width="78.3" height="0.9" fill="#d8d8d8"/><rect x="16" y="64.6" width="33.3" height="0.9" fill="#d8d8d8"/><rect x="16" y="66.8" width="32.7" height="0.9" fill="#d8d8d8"/><rect x="16" y="69.4" width="9.6" height="0.9" fill="#dadada"/><rect x="16" y="71.4" width="12" height="0.9" fill="#dadada"/><rect x="16" y="73.4" width="9" height="0.9" fill="#dadada"/><rect x="16" y="75.6" width="58" height="0.9" fill="#d0d4ea"/></svg></div>
<svg class="a" style="left:909px;top:430px" width="17" height="14" viewBox="0 0 17 14"><rect x="0.5" y="0.5" width="15" height="12.3" fill="#fff" stroke="#9a9a9a"/><rect x="1" y="1" width="14" height="2.2" fill="#bdbdbd"/><rect x="1" y="3.2" width="14" height="0.8" fill="#e9e9e9"/><path d="M2.9 12.8 A6.7 6.3 0 1 1 15.3 12.8 Z" fill="url(#glb)"/><path d="M6.6 9.6c.8-2.4 3-3.6 5.4-3M9.4 10.6c1.2-1.4 2.8-1.6 4-.8" stroke="#c9eeff" stroke-width="0.9" fill="none" opacity=".85"/><path d="M2.9 12.6H15.3" stroke="#2a6fb4" stroke-width="0.8"/></svg>
<div class="it" style="top:429px;"><span class="s" style="transform:scaleX(0.891);transform-origin:0 0">Under Frozen Tundra, an Icebreaking Ship Unco</span></div>
<div id="th4" class="th" style="top:445px;"><svg width="103" height="80" viewBox="0 0 103 80"><rect x="0" y="0" width="103" height="80" fill="#fdfdfd"/><rect x="1" y="1" width="100" height="1.3" fill="#d9c9a2"/><rect x="88" y="1" width="9" height="1.3" fill="#e0a070"/><rect x="98" y="1" width="3" height="1.3" fill="#d05048"/><rect x="1" y="2.6" width="100" height="1.6" fill="#eef0f3"/><rect x="101.2" y="2" width="1.3" height="77" fill="#bdbdbd"/><rect x="1" y="78.3" width="101" height="1.2" fill="#c9c2b4"/><rect x="0.5" y="2" width="0.8" height="76" fill="#e6e6e6"/><rect x="3" y="6.2" width="6" height="0.8" fill="#bbb"/><rect x="11" y="6.2" width="5" height="0.8" fill="#bbb"/><rect x="17.5" y="6.2" width="5" height="0.8" fill="#bbb"/><rect x="39" y="5.3" width="21" height="2" fill="#6a6a6a" rx="0.6"/><rect x="83" y="5.4" width="8" height="2.4" fill="#7d9cc0"/><rect x="92.2" y="5.4" width="4" height="2.4" fill="#8aa5c4"/><rect x="22" y="8.7" width="62" height="0.7" fill="#e8c8b8"/><rect x="9" y="9.6" width="86" height="0.5" fill="#e4e4e4"/><rect x="9" y="11.3" width="7" height="0.8" fill="#b5b5b5"/><rect x="9" y="15" width="72" height="2.1" fill="#5c5c5c" rx="0.5"/><rect x="9" y="19.3" width="18" height="0.8" fill="#e0c0b0"/><defs><linearGradient id="sky" x1="0" y1="0" x2="0" y2="1"><stop offset="0" stop-color="#2c63c2"/><stop offset="0.35" stop-color="#3f76d0"/><stop offset="0.56" stop-color="#8a8fc4"/><stop offset="0.62" stop-color="#9c92b8"/><stop offset="0.66" stop-color="#7a88c6"/><stop offset="1" stop-color="#5573bd"/></linearGradient></defs><g transform="translate(0,1)"><rect x="9" y="22" width="84" height="47" fill="url(#sky)"/><path d="M65 50.4l28-2.4v3.4l-28 2z" fill="#3a3550"/><path d="M9 58.6l25-2v2.4l-25 2.6z" fill="#2c3048"/><path d="M65 54l28-2v3.6l-28 2z" fill="#8fa2d6"/><rect x="43.2" y="23" width="2.5" height="19" fill="#46505c"/><rect x="41" y="30" width="7" height="1" fill="#56606c"/><rect x="39.5" y="37" width="1" height="6" fill="#5a6470"/><rect x="58" y="38" width="1" height="5" fill="#5a6470"/><path d="M35 44.5h27l1 5h-29z" fill="#dfe3ea"/><rect x="37" y="46" width="23" height="2.4" fill="#39414c"/><path d="M35.5 49.5h28.5l2.5 14h-30z" fill="#c5cad4"/><path d="M36.5 52l10-1.5l1 10l-10 2z" fill="#aeb4c0"/><path d="M35 62.5h32l1 6.5h-33z" fill="#20222c"/><path d="M67 59l7 1.5l1.5 8.5h-8z" fill="#4a64a0"/><rect x="9" y="62.2" width="25" height="6.8" fill="#14161e"/><path d="M12 63.8l2.6 1.8l-2.6 1.8z" fill="#fff"/><rect x="16" y="64" width="8" height="0.8" fill="#ccc"/><rect x="16" y="66" width="15" height="0.9" fill="#aaa"/></g><rect x="9" y="70.6" width="52" height="0.7" fill="#d8d8d8"/><rect x="9" y="72.2" width="50" height="0.7" fill="#dedede"/><path d="M4 39l-1.4 2l1.4 2M98 39l1.4 2l-1.4 2" stroke="#e2e2e2" stroke-width="0.8" fill="none"/><rect x="68" y="77.6" width="23" height="1.1" fill="#b888a8"/></svg></div>
<svg class="a" style="left:909px;top:534px" width="17" height="14" viewBox="0 0 17 14"><rect x="0.5" y="0.5" width="15" height="12.3" fill="#fff" stroke="#9a9a9a"/><rect x="1" y="1" width="14" height="2.2" fill="#bdbdbd"/><rect x="1" y="3.2" width="14" height="0.8" fill="#e9e9e9"/><path d="M2.9 12.8 A6.7 6.3 0 1 1 15.3 12.8 Z" fill="url(#glb)"/><path d="M6.6 9.6c.8-2.4 3-3.6 5.4-3M9.4 10.6c1.2-1.4 2.8-1.6 4-.8" stroke="#c9eeff" stroke-width="0.9" fill="none" opacity=".85"/><path d="M2.9 12.6H15.3" stroke="#2a6fb4" stroke-width="0.8"/></svg>
<div class="it" style="top:533px;"><span class="s" style="transform:scaleX(0.908);transform-origin:0 0">Semantic Web - Wikipedia, the free encycloped</span></div>
<div id="th5" class="th" style="top:549px;"><svg width="103" height="80" viewBox="0 0 103 80"><rect x="0" y="0" width="103" height="80" fill="#fdfdfd"/><rect x="1" y="1" width="100" height="1.3" fill="#d9c9a2"/><rect x="88" y="1" width="9" height="1.3" fill="#e0a070"/><rect x="98" y="1" width="3" height="1.3" fill="#d05048"/><rect x="1" y="2.6" width="100" height="1.6" fill="#eef0f3"/><rect x="101.2" y="2" width="1.3" height="77" fill="#bdbdbd"/><rect x="1" y="78.3" width="101" height="1.2" fill="#c9c2b4"/><rect x="0.5" y="2" width="0.8" height="76" fill="#e6e6e6"/><rect x="16" y="4.6" width="69" height="0.9" fill="#dcdcdc"/><rect x="16" y="7.2" width="6" height="1" fill="#a0a0a0"/><rect x="16" y="9.4" width="47" height="0.9" fill="#cfcfcf"/><rect x="20" y="12.2" width="52.3" height="0.9" fill="#cdcdcd"/><rect x="20" y="14.2" width="61.3" height="0.9" fill="#cdcdcd"/><rect x="22" y="16.2" width="16" height="0.9" fill="#cdcdcd"/><rect x="16" y="19.2" width="52" height="0.9" fill="#cdcdcd"/><rect x="16" y="22.8" width="10" height="1" fill="#a0a0a0"/><rect x="16" y="25.4" width="82" height="0.9" fill="#d2c4c4"/><rect x="16" y="27.3" width="46" height="0.9" fill="#cdcdcd"/><rect x="16.6" y="31" width="82.2" height="2.5" fill="#3a7fe0"/><rect x="16.6" y="33.4" width="5" height="1.7" fill="#3a7fe0"/><rect x="18" y="35.8" width="80" height="0.9" fill="#e2e2e2"/><rect x="18" y="37.4" width="80" height="0.9" fill="#e2e2e2"/><rect x="18" y="39.2" width="27" height="0.9" fill="#dcdcdc"/><rect x="17" y="41.2" width="81" height="0.9" fill="#cfcfcf"/><rect x="17" y="43" width="72.9" height="0.9" fill="#cfcfcf"/><rect x="17" y="45" width="81" height="0.9" fill="#e0e0e0"/><rect x="17" y="47" width="58" height="0.9" fill="#cfcfcf"/><rect x="17" y="49.4" width="81" height="0.9" fill="#cfcfcf"/><rect x="18" y="51.2" width="12" height="0.9" fill="#cfcfcf"/><rect x="16" y="53.4" width="82" height="0.9" fill="#cfcfcf"/><rect x="16" y="55.4" width="82" height="0.9" fill="#cfcfcf"/><rect x="16" y="57.3" width="36" height="0.9" fill="#d4d4d4"/><rect x="16" y="61.6" width="11" height="1" fill="#a0a0a0"/><rect x="16" y="64.4" width="47" height="0.9" fill="#dcdce6"/><rect x="16" y="67.8" width="11" height="1" fill="#a0a0a0"/><rect x="16" y="70.2" width="82" height="0.9" fill="#cfcfcf"/><rect x="16" y="72.2" width="82" height="0.9" fill="#cfcfcf"/><rect x="16" y="74.2" width="22" height="0.9" fill="#d4d4e4"/><rect x="18" y="76.6" width="46" height="0.9" fill="#cfd4ea"/></svg></div>
<svg class="a" style="left:909px;top:738px" width="17" height="14" viewBox="0 0 17 14"><rect x="0.5" y="0.5" width="15" height="12.3" fill="#fff" stroke="#9a9a9a"/><rect x="1" y="1" width="14" height="2.2" fill="#bdbdbd"/><rect x="1" y="3.2" width="14" height="0.8" fill="#e9e9e9"/><path d="M2.9 12.8 A6.7 6.3 0 1 1 15.3 12.8 Z" fill="url(#glb)"/><path d="M6.6 9.6c.8-2.4 3-3.6 5.4-3M9.4 10.6c1.2-1.4 2.8-1.6 4-.8" stroke="#c9eeff" stroke-width="0.9" fill="none" opacity=".85"/><path d="M2.9 12.6H15.3" stroke="#2a6fb4" stroke-width="0.8"/></svg>
<div class="it" style="top:737px;"><span class="s" style="transform:scaleX(0.917);transform-origin:0 0">Concept map - Wikipedia, the free encyclopedia</span></div>
<div id="th6" class="th" style="top:753px;height:58px;"><svg width="103" height="80" viewBox="0 0 103 80"><rect x="0" y="0" width="103" height="80" fill="#fdfdfd"/><rect x="1" y="1" width="100" height="1.3" fill="#d9c9a2"/><rect x="88" y="1" width="9" height="1.3" fill="#e0a070"/><rect x="98" y="1" width="3" height="1.3" fill="#d05048"/><rect x="1" y="2.6" width="100" height="1.6" fill="#eef0f3"/><rect x="101.2" y="2" width="1.3" height="77" fill="#bdbdbd"/><rect x="1" y="78.3" width="101" height="1.2" fill="#c9c2b4"/><rect x="0.5" y="2" width="0.8" height="76" fill="#e6e6e6"/><rect x="2" y="3.6" width="28" height="0.9" fill="#c8c8c8"/><rect x="15" y="10.6" width="7" height="1" fill="#a0a0a0"/><rect x="15" y="13.6" width="43" height="0.9" fill="#d2d2d2"/><rect x="15" y="15.6" width="29.2" height="0.9" fill="#d2d2d2"/><rect x="15" y="17.6" width="43" height="0.9" fill="#d2d2d2"/><rect x="15" y="19.6" width="37" height="0.9" fill="#d2d2d2"/><rect x="15" y="21.6" width="40.9" height="0.9" fill="#d2d2d2"/><rect x="15" y="23.6" width="34.7" height="0.9" fill="#d2d2d2"/><rect x="15" y="25.6" width="43" height="0.9" fill="#d2d2d2"/><rect x="15" y="29" width="43" height="0.9" fill="#d4d4d4"/><rect x="15" y="31" width="43" height="0.9" fill="#d4d4d4"/><rect x="15" y="33" width="39.5" height="0.9" fill="#d4d4d4"/><rect x="15" y="35" width="40.7" height="0.9" fill="#d4d4d4"/><rect x="15" y="37" width="43" height="0.9" fill="#d4d4d4"/><rect x="15" y="39" width="17.7" height="0.9" fill="#d4d4d4"/><rect x="17" y="42" width="37" height="0.9" fill="#d6d6d6"/><rect x="17" y="44" width="33.3" height="0.9" fill="#d6d6d6"/><rect x="17" y="46" width="41" height="0.9" fill="#d6d6d6"/><rect x="17" y="48" width="39.2" height="0.9" fill="#d6d6d6"/><rect x="17" y="50.4" width="80" height="0.9" fill="#d6d6d6"/><rect x="17" y="52.4" width="80" height="0.9" fill="#d6d6d6"/><rect x="17" y="54.4" width="80" height="0.9" fill="#d6d6d6"/><rect x="17" y="56.4" width="80" height="0.9" fill="#d6d6d6"/><rect x="17" y="58.4" width="80" height="0.9" fill="#d6d6d6"/><rect x="61" y="13" width="38" height="30" fill="#fbfbfb" stroke="#e0e0e0" stroke-width="0.6"/><rect x="77" y="16" width="6" height="2.4" fill="#cfe2ef" stroke="#8ab0c8" stroke-width="0.5"/><rect x="67" y="23" width="6" height="2.4" fill="#cfe2ef" stroke="#8ab0c8" stroke-width="0.5"/><rect x="85" y="22" width="7" height="2.4" fill="#cfe2ef" stroke="#8ab0c8" stroke-width="0.5"/><rect x="63" y="30" width="5" height="2.4" fill="#cfe2ef" stroke="#8ab0c8" stroke-width="0.5"/><rect x="72" y="30" width="6" height="2.4" fill="#cfe2ef" stroke="#8ab0c8" stroke-width="0.5"/><rect x="81" y="29" width="6" height="2.4" fill="#cfe2ef" stroke="#8ab0c8" stroke-width="0.5"/><rect x="91" y="29" width="6" height="2.4" fill="#cfe2ef" stroke="#8ab0c8" stroke-width="0.5"/><rect x="77" y="36" width="6" height="2.4" fill="#cfe2ef" stroke="#8ab0c8" stroke-width="0.5"/><rect x="89" y="36" width="6" height="2.4" fill="#cfe2ef" stroke="#8ab0c8" stroke-width="0.5"/><path d="M80 18.4L70 23M80 18.4l8 3.6M70 25.4l-4 4.6M70 25.4l5 4.6M88 24.4l-4 4.6M88 24.4l6 4.6M84 31.4l-4 4.6M94 31.4l-2 4.6" stroke="#8aa8b8" stroke-width="0.5" fill="none"/></svg></div>
<div class="gr" style="top:630.5px;height:99.5px;overflow:hidden;"><span class="s" style="transform:scaleX(.985);transform-origin:0 0">Vastness: The World Wide Web contains many<br>billions of pages. The SNOMED CT medical<br>terminology ontology alone contains 370,000 class<br>names, and existing technology has not yet been<br>able to eliminate all semantically duplicated terms.<br>Any automated reasoning system will have to deal<br>with truly huge inputs</span></div>
</div>
</body>
</html>
